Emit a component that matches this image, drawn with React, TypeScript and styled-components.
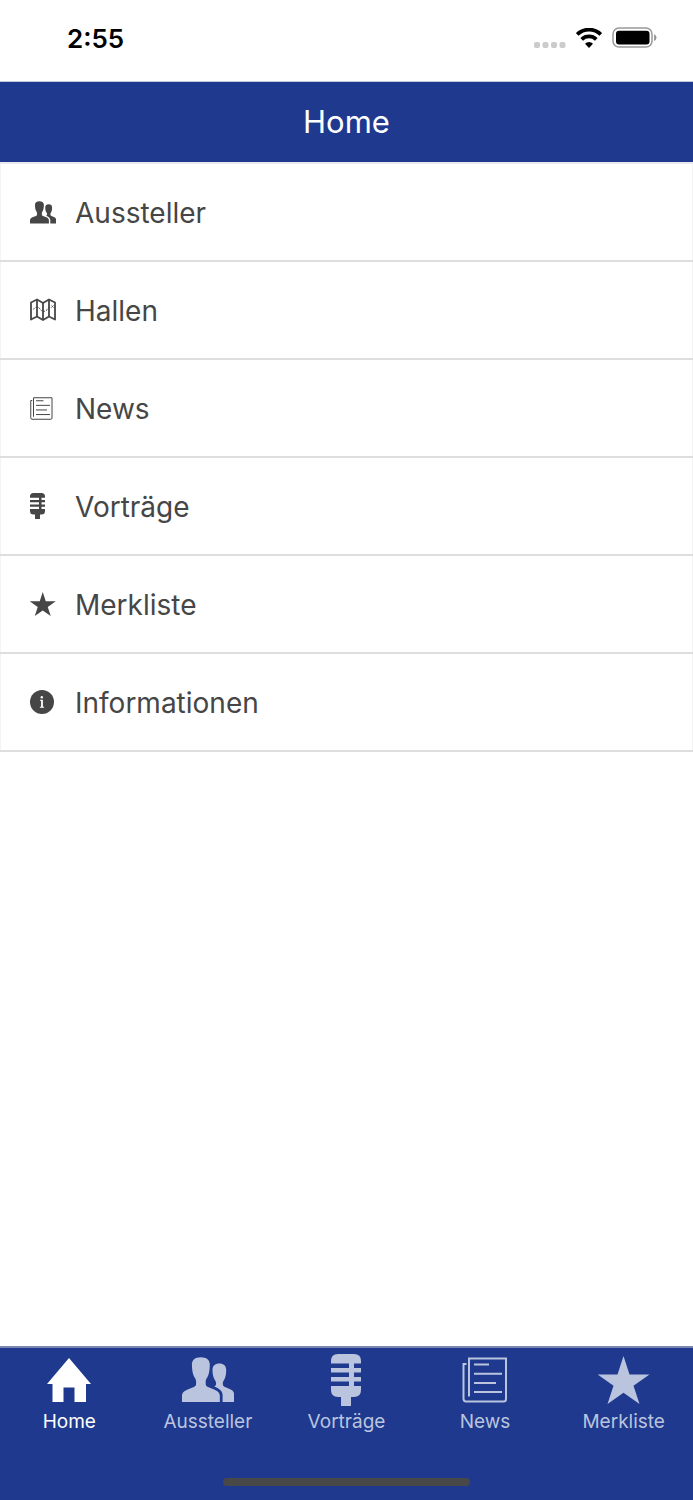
import React from "react";
import styled, { createGlobalStyle } from "styled-components";

const navy = "#1e398d";
const ink = "#464646";
const tabIdle = "#bac4df";

const GlobalStyle = createGlobalStyle`
  *, *::before, *::after { box-sizing: border-box; }
  body {
    margin: 0;
    background: #fff;
    font-family: Inter, "Liberation Sans", sans-serif;
  }
`;

const Screen = styled.div`
  display: flex;
  flex-direction: column;
  min-height: 100vh;
`;

const StatusBar = styled.div`
  display: flex;
  justify-content: space-between;
  align-items: flex-start;
  height: 82px;
  padding: 22px 36px 0 67px;
  border-bottom: 1px solid #c3c8da;
  color: #000;
`;

const Clock = styled.time`
  font-size: 26px;
  line-height: 34px;
  font-weight: 600;
`;

const StatusIcons = styled.div`
  display: flex;
  align-items: center;
  gap: 10px;
  height: 32px;
`;

const Header = styled.header`
  display: flex;
  align-items: center;
  justify-content: center;
  height: 80px;
  background: ${navy};
`;

const Title = styled.h1`
  margin: 0;
  color: #fff;
  font-size: 31px;
  line-height: 36px;
  font-weight: 400;
`;

const Main = styled.main`
  flex: 1;
`;

const Menu = styled.ul`
  margin: 0;
  padding: 0;
  list-style: none;
  border-top: 2px solid #e9e9ee;
`;

const MenuItem = styled.li`
  border-bottom: 2px solid #dedede;
`;

const MenuLink = styled.a`
  display: flex;
  align-items: center;
  height: 96px;
  padding: 2px 29px 0;
  border: solid #f3f3f4;
  border-width: 0 1px;
  color: ${ink};
  font-size: 28px;
  line-height: 36px;
  text-decoration: none;
`;

const MenuIcon = styled.span`
  display: flex;
  width: 45px;
  padding-bottom: 2px;
`;

const TabBar = styled.footer`
  background: ${navy};
  border-top: 2px solid #7b87ae;
  padding-bottom: 14px;
`;

const Tabs = styled.nav`
  display: grid;
  grid-template-columns: repeat(5, 1fr);
  padding-top: 6px;
`;

const Tab = styled.a<{ $active?: boolean }>`
  display: flex;
  flex-direction: column;
  align-items: center;
  gap: 4px;
  color: ${(p) => (p.$active ? "#fff" : tabIdle)};
  font-size: 19px;
  line-height: 24px;
  text-decoration: none;
`;

const TabIcon = styled.span`
  display: flex;
  align-items: center;
  justify-content: center;
  height: 52px;
`;

const HomeIndicator = styled.div`
  width: 247px;
  height: 8px;
  margin: 44px auto 0;
  border-radius: 4px;
  background: #484848;
`;

type IconProps = { small?: boolean };

const size = (w: number, h: number, small?: boolean) => ({
  width: small ? w / 2 : w,
  height: small ? h / 2 : h,
  viewBox: `0 0 ${w} ${h}`,
  "aria-hidden": true,
});

const HomeIcon = ({ small }: IconProps) => (
  <svg {...size(44, 44, small)} fill="currentColor">
    <path d="M22 0 44 26H39V44H27.500V29.500H16.500V44H5.500V26H0Z" />
  </svg>
);

const PeopleIcon = ({ small }: IconProps) => (
  <svg {...size(52, 46, small)} fill="currentColor">
    <path d="M18.800.3C24.500.3 28 3 27.800 8c-.1 5-.8 9.500-2.300 12-1.200 2-1.800 3-1.800 4.500V27c0 1.500.8 2.400 2.300 3l5.500 2.200c3.500 1.400 6.300 3.300 6.300 6.300V45H0v-6.500c0-3 2.800-4.900 6.300-6.300l5.500-2.200c1.500-.6 2.300-1.500 2.300-3v-2.500c0-1.500-.6-2.500-1.800-4.500C10.800 17.500 10 13 9.900 8 9.700 3 13.100.3 18.800.3Z" />
    <path d="M37.300 6.600c4.400 0 6.900 2.300 6.900 6.400 0 4-.6 7.500-2 9.700-1 1.600-1.400 2.400-1.400 3.800 0 1.800.6 3 2.200 3.600l3.500 1.400c3 1.200 5.500 2.600 5.500 5.200V45H40.600v-7c0-4-3.600-6.700-8.300-8.600 1.300-.5 1.800-1.500 1.800-2.900 0-1.400-.4-2.200-1.400-3.800-1.500-2.200-2.200-5.700-2.200-9.700 0-4.100 2.500-6.400 6.800-6.400Z" />
  </svg>
);

const MapIcon = () => (
  <svg width="26" height="24" viewBox="0 0 26 24" fill="none" stroke="currentColor" aria-hidden>
    <path d="M1 4.500 7 1.500 13 5 19 1.500 25 4.500V21.500L19 18.500 13 22 7 18.500 1 21.500Z" strokeWidth="1.800" strokeLinejoin="round" />
    <path d="M7 1.500v17M13 5v17M19 1.500v17" strokeWidth="1.800" />
    <path d="M3.500 11.500C5 8.500 8 8.300 10 11s4 3 6 1.500 3-3 5-3.500" strokeWidth="1" strokeDasharray="2 1" />
    <path d="m21.500 7.500 2 2m0-2-2 2" strokeWidth=".9" />
  </svg>
);

const NewsIcon = ({ small }: IconProps) => (
  <svg {...size(46, 46, small)} fill="none" stroke="currentColor" strokeWidth="2">
    <path d="M7 39.500V1.500H44V42q0 2.500-2.500 2.500H4Q1.500 44.500 1.500 41.500V7H4.500" />
    <path d="M12 7.500H27M12 16.700H40M12 25.900H34M12 35.100H40" />
  </svg>
);

const MicIcon = ({ small }: IconProps) => (
  <svg {...size(30, 52, small)} fill="currentColor">
    <path d="M7 0H23Q30 0 30 7V9.500H23V14H30V18.500H23V23H30V27.500H23V32H30V36Q30 43 23 43H20V52H10V43H7Q0 43 0 36V32H18V27.500H0V23H18V18.500H0V14H18V9.500H0V7Q0 0 7 0Z" />
  </svg>
);

const StarIcon = ({ small }: IconProps) => (
  <svg {...size(52, 48, small)} fill="currentColor">
    <path d="M25.500 0 31.500 18.500H51.500L35.500 29.800 41.500 48 25.500 36.800 9.500 48 15.500 29.800-.5 18.500H19.500Z" />
  </svg>
);

const InfoIcon = () => (
  <svg width="24" height="24" viewBox="0 0 24 24" aria-hidden>
    <circle cx="12" cy="12" r="12" fill="currentColor" />
    <g fill="#fff">
      <circle cx="11.800" cy="7.200" r="1.200" />
      <path d="M10 9.700h2.900v7h1.200v1H9.900v-1h1.200v-6H10Z" />
    </g>
  </svg>
);

const SignalDots = () => (
  <svg width="32" height="20" viewBox="0 0 32 20" fill="#cbcbcb" aria-hidden>
    {[0, 8.5, 17, 25.5].map((x) => (
      <rect key={x} x={x} y="14" width="6" height="6" rx="2" />
    ))}
  </svg>
);

const WifiIcon = () => (
  <svg width="26" height="20" viewBox="0 0 26 20" aria-hidden>
    <g fill="none" stroke="#000" strokeWidth="3.800">
      <path d="M1.200 6.400A17 17 0 0 1 24.800 6.400" />
      <path d="M5.700 11.400A10.500 10.500 0 0 1 20.300 11.400" />
    </g>
    <path d="M13 20 9 15.700A5.700 5.700 0 0 1 17 15.700Z" />
  </svg>
);

const BatteryIcon = () => (
  <svg width="45" height="22" viewBox="0 0 45 22" aria-hidden>
    <rect x="1" y="1" width="39" height="19" rx="6" fill="none" stroke="#999" strokeWidth="1.500" />
    <rect x="4" y="3.800" width="33.500" height="13.800" rx="3" />
    <path d="M42 7.200q2.500 1 2.500 3.400T42 14Z" fill="#999" />
  </svg>
);

const menu = [
  { label: "Aussteller", icon: <PeopleIcon small /> },
  { label: "Hallen", icon: <MapIcon /> },
  { label: "News", icon: <NewsIcon small /> },
  { label: "Vorträge", icon: <MicIcon small /> },
  { label: "Merkliste", icon: <StarIcon small /> },
  { label: "Informationen", icon: <InfoIcon /> },
];

const tabs = [
  { label: "Home", icon: <HomeIcon />, active: true },
  { label: "Aussteller", icon: <PeopleIcon /> },
  { label: "Vorträge", icon: <MicIcon /> },
  { label: "News", icon: <NewsIcon /> },
  { label: "Merkliste", icon: <StarIcon /> },
];

export default function App() {
  return (
    <Screen>
      <GlobalStyle />
      <StatusBar>
        <Clock>2:55</Clock>
        <StatusIcons>
          <SignalDots />
          <WifiIcon />
          <BatteryIcon />
        </StatusIcons>
      </StatusBar>
      <Header>
        <Title>Home</Title>
      </Header>
      <Main>
        <Menu>
          {menu.map((item) => (
            <MenuItem key={item.label}>
              <MenuLink href="#">
                <MenuIcon>{item.icon}</MenuIcon>
                {item.label}
              </MenuLink>
            </MenuItem>
          ))}
        </Menu>
      </Main>
      <TabBar>
        <Tabs>
          {tabs.map((tab) => (
            <Tab key={tab.label} href="#" $active={tab.active} aria-current={tab.active ? "page" : undefined}>
              <TabIcon>{tab.icon}</TabIcon>
              {tab.label}
            </Tab>
          ))}
        </Tabs>
        <HomeIndicator />
      </TabBar>
    </Screen>
  );
}
